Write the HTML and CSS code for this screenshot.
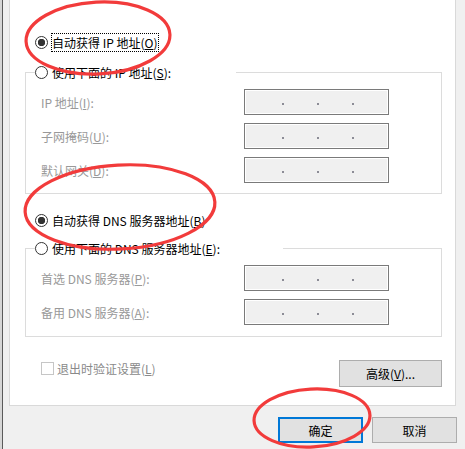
FILE: index.html
```html
<!DOCTYPE html>
<html lang="zh-CN">
<head>
    <meta charset="UTF-8">
    <meta name="viewport" content="width=device-width, initial-scale=1.0">
    <title>Internet 协议版本 4 (TCP/IPv4) 属性</title>
    <link rel="stylesheet" href="styles.css">
</head>
<body>
    <div class="window">
        <div class="edge"></div>
        <div class="main">
            <div class="panel">
                <div class="option first">
                    <span class="radio checked"></span>
                    <span class="text focus">自动获得 IP 地址(<u>O</u>)</span>
                </div>

                <fieldset class="group ip-group">
                    <legend class="option">
                        <span class="radio"></span>
                        <span class="text">使用下面的 IP 地址(<u>S</u>):</span>
                    </legend>
                    <div class="field">
                        <span>IP 地址(<u>I</u>):</span>
                        <div class="ip-box"><i></i><i></i><i></i></div>
                    </div>
                    <div class="field">
                        <span>子网掩码(<u>U</u>):</span>
                        <div class="ip-box"><i></i><i></i><i></i></div>
                    </div>
                    <div class="field">
                        <span>默认网关(<u>D</u>):</span>
                        <div class="ip-box"><i></i><i></i><i></i></div>
                    </div>
                </fieldset>

                <div class="option dns-auto">
                    <span class="radio checked"></span>
                    <span class="text">自动获得 DNS 服务器地址(<u>B</u>)</span>
                </div>

                <fieldset class="group dns-group">
                    <legend class="option">
                        <span class="radio"></span>
                        <span class="text">使用下面的 DNS 服务器地址(<u>E</u>):</span>
                    </legend>
                    <div class="field">
                        <span>首选 DNS 服务器(<u>P</u>):</span>
                        <div class="ip-box"><i></i><i></i><i></i></div>
                    </div>
                    <div class="field">
                        <span>备用 DNS 服务器(<u>A</u>):</span>
                        <div class="ip-box"><i></i><i></i><i></i></div>
                    </div>
                </fieldset>

                <div class="bottom-row">
                    <label class="check"><span class="box"></span><span>退出时验证设置(<u>L</u>)</span></label>
                    <button class="btn advanced">高级(<u>V</u>)...</button>
                </div>
            </div>

            <div class="actions">
                <button class="btn default">确定</button>
                <button class="btn">取消</button>
            </div>
        </div>
    </div>

    <svg class="marks" width="465" height="449" viewBox="0 0 465 449">
        <g fill="none" stroke="#f23b3b" stroke-width="3.2">
            <ellipse cx="98" cy="38" rx="72" ry="36" transform="rotate(-3 98 38)"/>
            <ellipse cx="120" cy="207" rx="95" ry="42" transform="rotate(-3 120 207)"/>
            <ellipse cx="312" cy="418" rx="58" ry="29" transform="rotate(-3 312 418)"/>
        </g>
    </svg>
</body>
</html>
```

FILE: styles.css
```css
* {
    box-sizing: border-box;
}
body {
    margin: 0;
    width: 465px;
    height: 449px;
    overflow: hidden;
    position: relative;
    background-color: #f0f0f0;
    color: #000;
    font-family: "Noto Sans CJK SC", "Microsoft YaHei", sans-serif;
    font-size: 12px;
}
u {
    text-decoration-thickness: 1px;
}
.window {
    display: flex;
    height: 100%;
}
.edge {
    width: 3px;
    background-color: #d6d6d6;
    border-right: 1px solid #5a5a5a;
}
.main {
    flex: 1;
    display: flex;
    flex-direction: column;
}
.panel {
    width: 447px;
    margin-left: 6px;
    padding: 33px 0 18px;
    background-color: #fff;
    border: 1px solid #d9d9d9;
    border-top: none;
}
.option {
    display: flex;
    align-items: center;
    height: 18px;
    line-height: 17px;
}
.first {
    height: 19px;
    margin-left: 25px;
}
.dns-auto {
    margin: 17px 0 0 25px;
}
.radio {
    flex: none;
    width: 13px;
    height: 13px;
    margin-right: 3px;
    border: 1px solid #333;
    border-radius: 50%;
    background: #fff;
}
.radio.checked {
    background: radial-gradient(circle, #333 0 3.4px, #fff 4px);
}
.text {
    border: 1px dotted transparent;
}
.focus {
    border-color: #000;
}
.group {
    min-width: 0;
    margin: 11px 13px 0 15px;
    padding: 8px 52px 10px 9px;
    border: 1px solid #dcdcdc;
}
.group legend {
    width: 201px;
    padding: 0;
}
.dns-group {
    margin-top: 10px;
    padding-bottom: 11px;
}
.dns-group legend {
    width: 248px;
}
.field {
    display: flex;
    justify-content: space-between;
    align-items: center;
    height: 26px;
    padding-left: 6px;
    color: #999;
}
.field + .field {
    margin-top: 8px;
}
.ip-box {
    display: flex;
    gap: 33px;
    width: 145px;
    height: 26px;
    padding: 13px 0 0 37px;
    background-color: #f0f0f0;
    border: 1px solid #7a7a7a;
    box-shadow: inset 0 0 0 1px #fff;
}
.ip-box i {
    width: 2px;
    height: 2px;
    background-color: #8c8c96;
}
.bottom-row {
    display: flex;
    justify-content: space-between;
    align-items: flex-start;
    margin: 23px 13px 0 31px;
}
.check {
    display: flex;
    align-items: center;
    gap: 3px;
    line-height: 17px;
    color: #8a8a8a;
}
.box {
    width: 13px;
    height: 13px;
    background: #fff;
    border: 1px solid #c6c6c6;
}
.btn {
    padding: 0;
    font: inherit;
    color: #000;
    background-color: #e1e1e1;
    border: 1px solid #adadad;
}
.advanced {
    width: 103px;
    height: 27px;
}
.actions {
    display: flex;
    justify-content: flex-end;
    gap: 9px;
    margin-top: 11px;
    padding-right: 8px;
}
.actions .btn {
    width: 85px;
    height: 26px;
}
.default {
    border: 2px solid #0078d7;
}
.marks {
    position: absolute;
    left: 0;
    top: 0;
    pointer-events: none;
}
```
